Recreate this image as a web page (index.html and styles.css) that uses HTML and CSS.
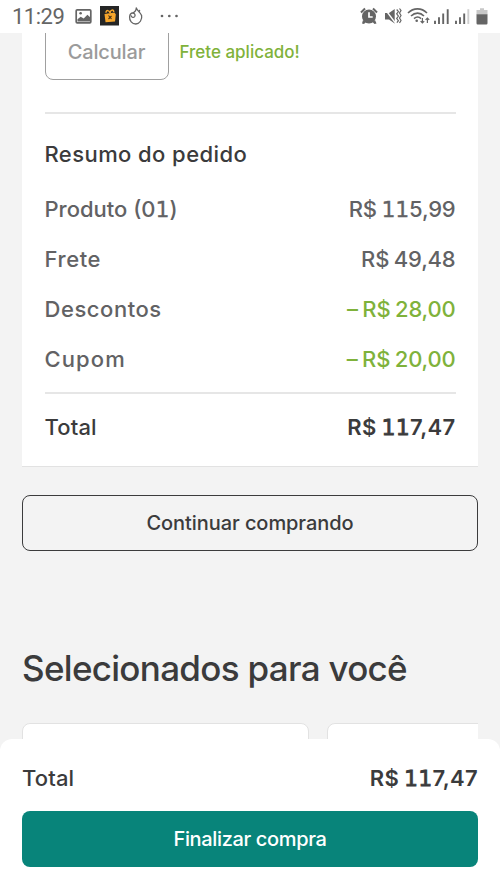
FILE: index.html
```html
<!DOCTYPE html>
<html lang="pt-BR">
<head>
<meta charset="utf-8">
<meta name="viewport" content="width=device-width, initial-scale=1">
<title>Carrinho</title>
<link rel="stylesheet" href="styles.css">
</head>
<body>
<div class="screen">
  <header class="status">
    <span class="clock">11:29</span>
    <svg class="status-icons" viewBox="0 0 120 33" width="120" height="33" aria-hidden="true">
      <rect x="6.2" y="9.8" width="14.6" height="13" rx="1" fill="none" stroke="#656565" stroke-width="1.7"/>
      <path d="M7.5 21.5v-2.3l3.2-2.5 3 1.7 3.7-3.6 3 2.7v4z" fill="#656565"/><circle cx="10.6" cy="13.2" r="1.3" fill="#656565"/>
      <rect x="30" y="6" width="19" height="19.500" fill="#252626"/>
      <path d="M34.500 14l10-1.500 1.300 2-.8 7-9.500.8z" fill="#f6a62c"/>
      <path d="M36 12.800c0-3.300 3.300-2.500 4 0 .8-3.600 4-3.400 3.700-.8" fill="none" stroke="#f6a62c" stroke-width="1.500"/>
      <path d="M38.500 15.500l3 3.500m0-3l-3 3" stroke="#443018" stroke-width="1.100"/>
      <path d="M66.300 7.800C66.600 10 70.500 12.500 71.600 15.500C72.500 19.500 69.500 24 65.800 24C62 24 59.300 20.500 59.600 17C59.800 14.500 61.200 13 62.800 13C64.800 13 65.600 15 64.700 16.500C63.700 18 61.500 17.600 61.300 16M62.800 13C65 12 66.300 10.500 66.300 7.800M69 11.900C69.500 11.400 69.700 11 69.600 10.500" fill="none" stroke="#656565" stroke-width="1.300" stroke-linejoin="round" stroke-linecap="round"/>
      <g fill="#656565"><circle cx="92" cy="16" r="1.350"/><circle cx="99.300" cy="16" r="1.350"/><circle cx="106.500" cy="16" r="1.350"/></g>
    </svg>
    <svg class="status-signal" viewBox="0 0 140 33" width="140" height="33" aria-hidden="true">
      <g fill="#656565"><circle cx="9" cy="16.500" r="7"/><path d="M3 20l-1 3.500 2 .5 2-2zM15 20l1.500 3.500-2 .5-2-2z"/></g>
      <path d="M1 12.500l4-4M17 12.500l-4-4" stroke="#656565" stroke-width="2"/>
      <path d="M9 12.300v4.700h3.700" fill="none" stroke="#fff" stroke-width="1.700"/>
      <path d="M25 13h4l5.700-4v14.500L29 19.500h-4z" fill="#656565"/>
      <path d="M24.500 8.500l10.500 14" stroke="#fff" stroke-width="1.300"/>
      <path d="M36.700 9.500l1.700 2-1.700 2.300 1.700 2.300-1.700 2.300 1.700 2.300-1.500 2M39.500 8.500l1.500 2-1.500 2.500 1.500 2.500-1.500 2.500 1.500 2.500-1.500 2.500" fill="none" stroke="#656565" stroke-width="1.200"/>
      <path d="M48 13c5.500-5.500 13.500-5.500 19 0M51 16c4-3.800 9.300-3.800 13 0M54 18.600c2.300-2 5-2 7 0" fill="none" stroke="#656565" stroke-width="1.600"/>
      <circle cx="56.700" cy="20.700" r="1.300" fill="#656565"/>
      <path d="M62.400 18v5m-1.800-1.800l1.800 1.800 1.800-1.800M67.400 23v-5m-1.800 1.800l1.800-1.800 1.800 1.800" fill="none" stroke="#656565" stroke-width="1.200"/>
      <path d="M75 20.800V24M79 17.300V24M83.200 13.500V24M87.700 9.200V24M96 20.800V24M100 17.300V24M104.200 13.500V24" stroke="#656565" stroke-width="1.900"/>
      <path d="M108.300 9.200V24" stroke="#cfcfcf" stroke-width="1.900"/>
      <path d="M116.500 10h3.500V8.200h4V10h3.500v4.500h-11z" fill="#c8c8c8"/><path d="M116.500 14.300h11v8.900q0 1.200-1.200 1.200h-8.600q-1.200 0-1.200-1.200z" fill="#656565"/>
    </svg>
  </header>

  <main class="page">
    <section class="card">
      <div class="shipping">
        <button class="calc">Calcular</button>
        <span class="applied">Frete aplicado!</span>
      </div>
      <h2 class="summary-title">Resumo do pedido</h2>
      <div class="row"><span class="product">Produto (0<span class="one">1</span>)</span><span class="amount">R$ <span class="one">1</span><span class="one">1</span>5,99</span></div>
      <div class="row"><span class="freight">Frete</span><span class="amount">R$ 49,48</span></div>
      <div class="row"><span class="discount">Descontos</span><span class="amount green">– R$ 28,00</span></div>
      <div class="row"><span class="coupon">Cupom</span><span class="amount green">– R$ 20,00</span></div>
      <div class="row total"><span class="total-label">Total</span><span class="amount strong">R$ <span class="one">1</span><span class="one">1</span>7,47</span></div>
    </section>
    <button class="continue">Continuar comprando</button>
    <h1 class="heading">Selecionados para você</h1>
    <div class="carousel"><div class="item"></div><div class="item"></div></div>
  </main>

  <footer class="checkout">
    <div class="row"><span class="total-label">Total</span><span class="amount strong">R$ <span class="one">1</span><span class="one">1</span>7,47</span></div>
    <button class="finish">Finalizar compra</button>
  </footer>
</div>
</body>
</html>
```
FILE: styles.css
```css
* { box-sizing: border-box; }
body { margin: 0; background: #f3f3f3; color: #3b3b3c; font-family: Inter, "Liberation Sans", sans-serif; }
button { padding: 0; font: inherit; color: inherit; background: none; white-space: nowrap; }
h1, h2 { margin: 0; font-weight: 500; white-space: nowrap; }

.screen { display: flex; flex-direction: column; height: 889px; overflow: hidden; }
.status { flex: none; display: flex; align-items: center; height: 33px; padding: 0 0 0 12px; background: #fff; }
.clock { width: 58px; font: 400 22px/33px Roboto, sans-serif; letter-spacing: -0.5px; color: #656565; white-space: nowrap; }
.status-icons, .status-signal { flex: none; display: block; }
.status-signal { margin-left: auto; }

.page { flex: 1; min-height: 0; padding: 0 22px; overflow: hidden; }
.card { height: 434px; padding: 0 22.5px; background: #fff; border-bottom: 1.5px solid #e2e2e2; }
.shipping { display: flex; align-items: flex-start; gap: 11px; height: 81px; border-bottom: 2px solid #e6e6e6; }
.calc { width: 124px; height: 56px; margin-top: -9px; border: 1.5px solid #a0a0a0; border-radius: 8px; font-size: 20px; font-weight: 500; letter-spacing: -0.15px; color: #9b9b9b; }
.applied { line-height: 38px; font-size: 17px; font-weight: 500; letter-spacing: 0; color: #7fb23b; white-space: nowrap; }
.summary-title { height: 70px; padding-top: 25px; font-size: 22px; line-height: 30px; letter-spacing: 0.42px; }

.row { display: flex; justify-content: space-between; align-items: center; height: 50px; font-size: 22px; font-weight: 500; line-height: 30px; color: #626264; white-space: nowrap; }
.product { letter-spacing: 0; }
.freight { letter-spacing: 0.6px; }
.discount { letter-spacing: 0.55px; }
.coupon { letter-spacing: 1.1px; }
.total-label { letter-spacing: 0.15px; }
.amount { letter-spacing: -0.2px; word-spacing: -1px; }
.one { font-family: "DejaVu Sans", sans-serif; font-weight: 400; line-height: 1; -webkit-text-stroke: 0.3px currentColor; }
.green { color: #7fb23b; }
.strong { font-weight: 600; letter-spacing: 0.3px; }
.strong .one { -webkit-text-stroke-width: 0.8px; }
.total { height: 68px; margin-top: 8px; border-top: 2px solid #e6e6e6; color: #3b3b3c; }

.continue { display: block; width: 456px; height: 56px; margin-top: 28px; border: 1.5px solid #3b3b3c; border-radius: 8px; font-size: 20px; font-weight: 500; letter-spacing: -0.07px; }
.heading { margin-top: 92px; font-size: 35px; line-height: 50px; letter-spacing: -0.7px; }
.carousel { display: flex; gap: 18px; margin-top: 30px; overflow: hidden; }
.item { flex: none; width: 287px; height: 100px; border: 1.5px solid #e2e2e2; border-radius: 8px; background: #fff; }

.checkout { flex: none; height: 150px; padding: 14px 22px 0; border-radius: 12px 12px 0 0; background: #fff; }
.checkout .row { color: #3b3b3c; }
.finish { display: block; width: 456px; height: 56px; margin-top: 8px; border: 0; border-radius: 8px; background: #08847a; color: #fff; font-size: 20px; font-weight: 500; letter-spacing: -0.35px; }
```
